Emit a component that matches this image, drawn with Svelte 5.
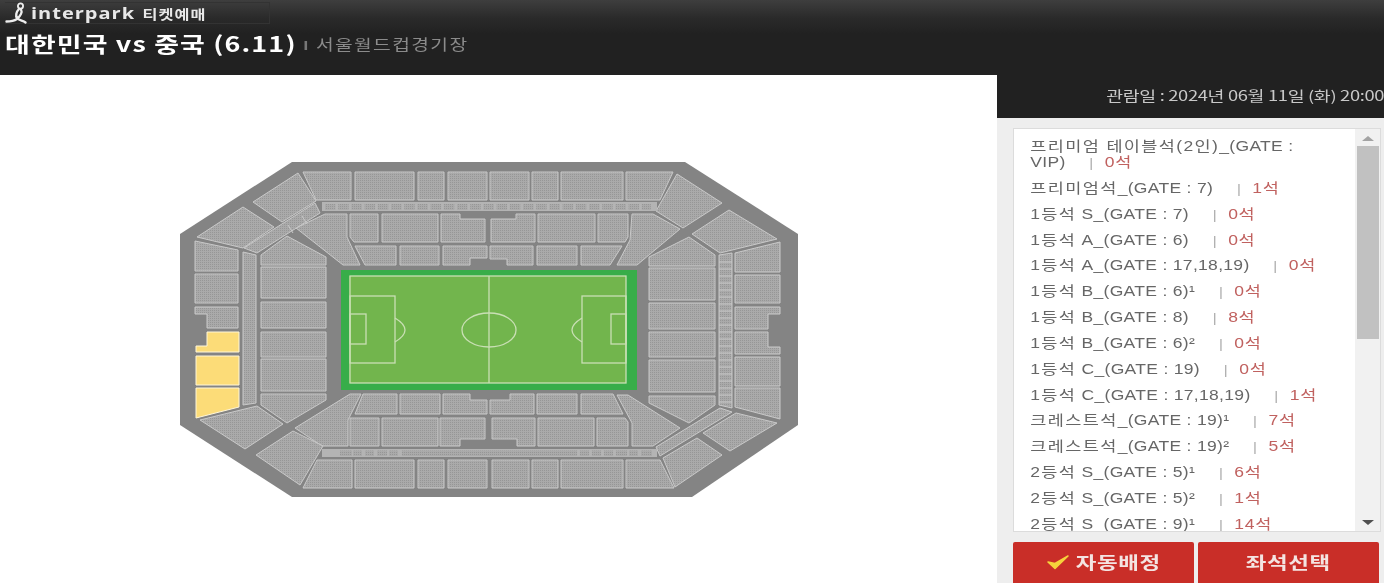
<script lang="ts">
	const seats = [
		{ grade: '프리미엄 테이블석(2인)', gate: '_(GATE : VIP)', count: 0 },
		{ grade: '프리미엄석', gate: '_(GATE : 7)', count: 1 },
		{ grade: '1등석', gate: ' S_(GATE : 7)', count: 0 },
		{ grade: '1등석', gate: ' A_(GATE : 6)', count: 0 },
		{ grade: '1등석', gate: ' A_(GATE : 17,18,19)', count: 0 },
		{ grade: '1등석', gate: ' B_(GATE : 6)¹', count: 0 },
		{ grade: '1등석', gate: ' B_(GATE : 8)', count: 8 },
		{ grade: '1등석', gate: ' B_(GATE : 6)²', count: 0 },
		{ grade: '1등석', gate: ' C_(GATE : 19)', count: 0 },
		{ grade: '1등석', gate: ' C_(GATE : 17,18,19)', count: 1 },
		{ grade: '크레스트석', gate: '_(GATE : 19)¹', count: 7 },
		{ grade: '크레스트석', gate: '_(GATE : 19)²', count: 5 },
		{ grade: '2등석', gate: ' S_(GATE : 5)¹', count: 6 },
		{ grade: '2등석', gate: ' S_(GATE : 5)²', count: 1 },
		{ grade: '2등석', gate: ' S_(GATE : 9)¹', count: 14 }
	];

	function rect(x1: number, y1: number, x2: number, y2: number): string {
		return `${x1},${y1} ${x2},${y1} ${x2},${y2} ${x1},${y2}`;
	}

	// grey blocks, in page coordinates
	const blocks = [
		// top row
		'303,172 351,172 351,200 316,200',
		rect(355, 172, 414, 200),
		rect(418, 172, 444, 200),
		rect(448, 172, 487, 200),
		rect(490, 172, 529, 200),
		rect(532, 172, 558, 200),
		rect(561, 172, 623, 200),
		'626,172 673,172 660,200 626,200',
		// upper stand
		'296,228 325,214 347,214 347,237 360,265 343,265',
		'350,214 378,214 378,242 354,242 350,237',
		rect(382, 214, 438, 242),
		'441,214 460,214 460,219 485,219 485,242 441,242',
		'491,219 516,219 516,214 535,214 535,242 491,242',
		rect(538, 214, 595, 242),
		'598,214 628,214 628,237 625,242 598,242',
		'632,214 653,214 680,229 637,265 617,265 630,240',
		'355,246 396,246 396,265 365,265',
		rect(400, 246, 439, 265),
		'443,246 487,246 487,258 470,258 470,265 443,265',
		'490,246 533,246 533,265 507,265 507,259 490,259',
		rect(537, 246, 577, 265),
		'581,246 622,246 610,265 581,265',
		// lower stand
		'363,394 397,394 397,414 355,414',
		rect(400, 394, 440, 414),
		'443,394 470,394 470,400 487,400 487,414 443,414',
		'490,400 510,400 510,394 534,394 534,414 490,414',
		rect(537, 394, 577, 414),
		'581,394 613,394 623,414 581,414',
		'295,428 350,394 361,394 348,420 348,446 322,446',
		rect(350, 418, 379, 446),
		rect(382, 418, 438, 446),
		'440,418 485,418 485,439 460,439 460,446 440,446',
		'492,418 535,418 535,446 517,446 517,439 492,439',
		rect(538, 418, 594, 446),
		'597,418 625,418 628,422 628,446 597,446',
		'617,395 628,395 680,428 653,446 632,446 632,423',
		// bottom row
		'317,460 352,460 352,488 303,488',
		rect(355, 460, 414, 488),
		rect(418, 460, 444, 488),
		rect(448, 460, 487, 488),
		rect(492, 460, 529, 488),
		rect(532, 460, 558, 488),
		rect(561, 460, 623, 488),
		'626,460 660,460 674,488 626,488',
		// left end
		'253,202 298,173 316,201 282,222',
		'197,237 243,207 274,227 243,248',
		'244,248 315,203 320,213 257,253',
		'195,241 238,250 238,271 195,271',
		rect(195, 274, 238, 303),
		'195,307 238,307 238,328 207,328 207,314 195,314',
		'243,252 256,255 256,403 243,405',
		'261,255 287,236 326,257 326,265 261,265',
		rect(261, 267, 326, 298),
		rect(261, 302, 326, 328),
		rect(261, 332, 326, 357),
		rect(261, 359, 326, 391),
		'261,394 326,394 326,400 287,423 261,405',
		'200,420 257,406 283,424 245,449',
		'256,455 293,431 323,446 300,485',
		// right end
		'656,211 677,174 722,203 683,228',
		'692,234 729,210 777,239 720,253',
		'735,253 780,242 780,272 735,272',
		rect(735, 275, 780, 303),
		'735,307 780,307 780,314 768,314 768,329 735,329',
		'735,332 768,332 768,347 780,347 780,354 735,354',
		rect(735, 357, 780, 386),
		'735,388 780,388 780,419 735,407',
		'719,255 732,253 732,408 719,405',
		'649,257 689,237 715,255 715,266 649,266',
		rect(649, 268, 715, 300),
		rect(649, 303, 715, 329),
		rect(649, 332, 715, 357),
		rect(649, 360, 715, 392),
		'649,396 715,396 715,405 689,423 649,403',
		'703,433 736,413 777,423 730,451',
		'656,447 720,408 732,412 660,456',
		'663,458 697,438 722,455 675,487'
	];

	const upperCells = Array.from({ length: 25 }, (_, i) => 325 + i * 13.2);
	const lowerCells = [
		[340, 352], [353, 362], [365, 374], [377, 387], [389, 398], [402, 577],
		[580, 589], [592, 601], [604, 613], [616, 627], [629, 638], [641, 652]
	];
	const ladder = Array.from({ length: 21 }, (_, i) => 262 + i * 7);

	const yellow = [
		'207,332 239,332 239,352 196,352 196,346 207,346',
		rect(196, 356, 239, 385),
		'196,388 239,388 239,407 196,418'
	];
</script>

<div class="page">
	<header class="top">
		<div class="brand">
			<svg class="runner" viewBox="0 0 28 24" width="28" height="24" aria-hidden="true">
				<circle cx="18.5" cy="5" r="2.6" />
				<path d="M17 8 C14 11 13.5 15 15 17 C17 19.5 21 19.5 23.5 21.5 M19 8.5 C20.5 11 18.5 15 15 18 C12 20 8 20.5 4.5 20.5" />
			</svg>
			<div class="brand-text">
				<span class="brand-name">interpark</span>
				<span class="brand-sub">티켓예매</span>
			</div>
		</div>
		<div class="title-row">
			<h1>대한민국 vs 중국 (6.11)</h1>
			<span class="divider"></span>
			<span class="venue">서울월드컵경기장</span>
		</div>
	</header>

	<main class="body">
		<section class="map">
			<svg viewBox="0 75 997 508" width="997" height="508" aria-label="좌석 배치도">
				<defs>
					<pattern id="seat" width="2" height="2" patternUnits="userSpaceOnUse">
						<rect width="2" height="2" fill="#aaaaaa" />
						<rect width="1" height="1" fill="#969696" />
					</pattern>
					<filter id="soft" x="0" y="0" width="1" height="1">
						<feGaussianBlur stdDeviation="0.35" />
					</filter>
				</defs>
				<g filter="url(#soft)">
					<polygon points="292,162 685,162 798,234 798,425 692,497 292,497 180,425 180,234" fill="#848484" />

					{#each blocks as points}
						<polygon {points} class="block" />
					{/each}
					<rect x="322" y="202" width="335" height="9" fill="#b4b4b4" />
					<rect x="322" y="449" width="335" height="8" fill="#b4b4b4" />
					{#each upperCells as x, i}
						<rect class="cell" x={x} y="204" width={i === 24 ? 9 : 10.5} height="6" />
					{/each}
					{#each lowerCells as c}
						<rect class="cell" x={c[0]} y="450.5" width={c[1] - c[0]} height="5.5" />
					{/each}
					{#each ladder as y}
						<line x1="719" x2="732" y1={y} y2={y} class="rung" />
					{/each}
					<line x1="288" y1="225" x2="293" y2="233" class="rung" />
					<line x1="302" y1="216" x2="307" y2="224" class="rung" />

					{#each yellow as points}
						<polygon {points} class="sold" />
					{/each}

					<rect x="341" y="270" width="296" height="120" fill="#38ad4a" />
					<rect x="349" y="276" width="277" height="107" fill="#72b54e" />
					<g class="lines">
						<rect x="350" y="276" width="276" height="107" />
						<line x1="489" y1="276" x2="489" y2="383" />
						<ellipse cx="489" cy="330" rx="27" ry="17" />
						<rect x="350" y="296" width="45" height="67" />
						<rect x="350" y="314" width="16" height="30" />
						<path d="M395 318 Q415 330 395 342" />
						<rect x="582" y="296" width="44" height="67" />
						<rect x="611" y="314" width="15" height="30" />
						<path d="M582 318 Q562 330 582 342" />
					</g>
				</g>
			</svg>
		</section>

		<aside class="side">
			<div class="date"><span>관람일 : 2024년 06월 11일 (화) 20:00</span></div>
			<div class="side-body">
				<div class="list-box">
					<div class="list-scroll">
						<ul class="list">
							{#each seats as seat}
								<li>
									<span class="grade">{seat.grade}</span>{seat.gate}<span class="sep">|</span><span class="count">{seat.count}석</span>
								</li>
							{/each}
						</ul>
					</div>
					<div class="scrollbar">
						<span class="arrow up"></span>
						<span class="thumb"></span>
						<span class="arrow down"></span>
					</div>
				</div>
				<div class="actions">
					<button type="button">
						<svg viewBox="0 0 24 18" width="24" height="18" aria-hidden="true">
							<path d="M2 9 L9 15.5 L22 3 L9 10.5 Z" fill="#f6d33c" stroke="#f6d33c" stroke-width="1.5" stroke-linejoin="round" />
						</svg>
						<span class="label">자동배정</span>
					</button>
					<button type="button"><span class="label">좌석선택</span></button>
				</div>
			</div>
		</aside>
	</main>
</div>

<style>
	:global(body) {
		margin: 0;
		background: #fff;
		overflow: hidden;
	}

	.page {
		width: 1384px;
		height: 583px;
		overflow: hidden;
		font-family: "Noto Sans CJK KR", "Liberation Sans", sans-serif;
		display: flex;
		flex-direction: column;
	}

	.top {
		height: 75px;
		flex-shrink: 0;
		box-sizing: border-box;
		padding: 2px 0 0 5px;
		background: linear-gradient(#3e3e3e 0, #2a2a2a 18px, #212121 34px, #212121 100%);
	}

	.brand {
		display: flex;
		align-items: center;
		height: 22px;
		width: 265px;
		box-sizing: border-box;
		border: 1px solid #333;
		border-left: none;
		color: #e8e8e8;
	}

	.runner {
		margin-left: -3px;
		flex-shrink: 0;
	}

	.runner circle {
		fill: none;
		stroke: #eee;
		stroke-width: 1.8;
	}

	.runner path {
		fill: none;
		stroke: #eee;
		stroke-width: 2.4;
		stroke-linecap: round;
	}

	/* the source shot is stretched sideways, so the text is too */
	.brand-text {
		display: flex;
		align-items: center;
		margin-left: 1px;
		transform: scaleX(1.25);
		transform-origin: left center;
		white-space: nowrap;
	}

	.brand-name {
		font-family: "Open Sans", sans-serif;
		font-size: 16px;
		font-weight: 700;
		letter-spacing: 0.8px;
	}

	.brand-sub {
		margin-left: 6px;
		font-size: 13px;
		font-weight: 700;
		letter-spacing: 0.8px;
	}

	.title-row {
		display: flex;
		align-items: center;
		height: 30px;
		margin-top: 4px;
		transform: scaleX(1.28);
		transform-origin: left center;
		white-space: nowrap;
	}

	h1 {
		margin: 0;
		font-size: 21px;
		font-weight: 700;
		color: #fff;
		letter-spacing: 0.9px;
		line-height: 30px;
	}

	.divider {
		width: 2px;
		height: 9px;
		margin: 4px 7px 0 6px;
		background: #777;
	}

	.venue {
		font-size: 15px;
		color: #8b8b8b;
		letter-spacing: 1.1px;
	}

	.body {
		display: flex;
		flex: 1;
		min-height: 0;
	}

	.map {
		width: 997px;
		flex-shrink: 0;
		background: #fff;
	}

	.map svg {
		display: block;
	}

	.block {
		fill: url(#seat);
		stroke: #c9c9c9;
		stroke-width: 1;
	}

	.cell {
		fill: url(#seat);
	}

	.rung {
		stroke: #c9c9c9;
		stroke-width: 1;
	}

	.sold {
		fill: #fcdc78;
		stroke: #fff6d8;
		stroke-width: 1;
	}

	.lines {
		fill: none;
		stroke: #c9dfb4;
		stroke-width: 1.3;
	}

	.side {
		flex: 1;
		display: flex;
		flex-direction: column;
		background: #eee;
		min-width: 0;
	}

	.date {
		height: 43px;
		flex-shrink: 0;
		box-sizing: border-box;
		padding-top: 10px;
		background: #212121;
		color: #c8c8c8;
		font-size: 14px;
		line-height: 20px;
		text-align: right;
		white-space: nowrap;
		letter-spacing: -0.25px;
		overflow: hidden;
	}

	.date span {
		display: inline-block;
		transform: scaleX(1.31);
		transform-origin: right center;
	}

	.side-body {
		padding: 10px 3px 0 16px;
		display: flex;
		flex-direction: column;
		gap: 10px;
	}

	.list-box {
		display: flex;
		height: 404px;
		box-sizing: border-box;
		background: #fff;
		border: 1px solid #dcdcdc;
		overflow: hidden;
	}

	.list-scroll {
		width: 341px;
		flex-shrink: 0;
		overflow: hidden;
	}

	.list {
		list-style: none;
		margin: 0;
		padding: 4px 0 0 13px;
		width: 250px;
		box-sizing: border-box;
		transform: scaleX(1.25);
		transform-origin: left top;
	}

	.list li {
		padding: 5px 0 4.85px;
		font-family: "Liberation Sans", "Noto Sans CJK KR", sans-serif;
		font-size: 14px;
		line-height: 16px;
		color: #666;
		letter-spacing: 0.25px;
	}

	.grade {
		letter-spacing: 1.1px;
	}

	.sep {
		margin: 0 9px 0 19px;
		color: #aaa;
		font-size: 12px;
		line-height: 1;
	}

	.count {
		color: #c0615f;
		letter-spacing: 0.55px;
	}

	.scrollbar {
		flex: 1;
		display: flex;
		flex-direction: column;
		align-items: center;
		background: #f1f1f1;
		padding-top: 7px;
	}

	.thumb {
		width: 22px;
		height: 193px;
		margin-top: 5px;
		background: #c1c1c1;
	}

	.arrow {
		width: 0;
		height: 0;
		border-left: 6px solid transparent;
		border-right: 6px solid transparent;
	}

	.arrow.up {
		border-bottom: 5px solid #a3a3a3;
	}

	.arrow.down {
		margin-top: auto;
		margin-bottom: 6px;
		border-top: 5px solid #505050;
	}

	.actions {
		display: flex;
		gap: 4px;
		width: 366px;
	}

	.actions button {
		flex: 1;
		height: 41px;
		display: flex;
		align-items: center;
		justify-content: center;
		gap: 6px;
		padding: 0 0 2px;
		border: none;
		border-radius: 2px 2px 0 0;
		background: #c92e28;
		color: #f4e4e2;
		font-family: "Noto Sans CJK KR", sans-serif;
		font-size: 17px;
		font-weight: 700;
		letter-spacing: 0.5px;
	}

	.label {
		display: inline-block;
		margin: 0 10px;
		transform: scaleX(1.32);
	}
</style>
